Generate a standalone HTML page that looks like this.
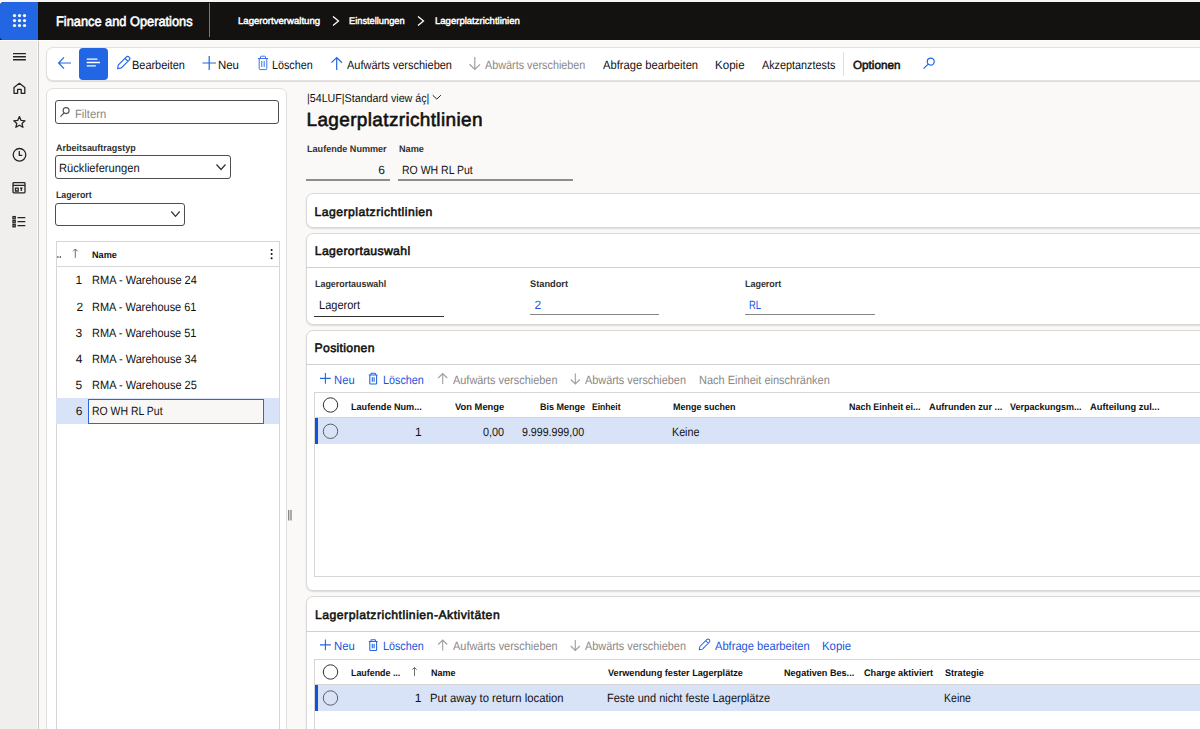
<!DOCTYPE html>
<html><head><meta charset="utf-8"><style>
html,body{margin:0;padding:0}
body{width:1200px;height:729px;overflow:hidden;position:relative;background:#faf9f8;font-family:"Liberation Sans",sans-serif;text-rendering:geometricPrecision}
.t{position:absolute;white-space:pre;line-height:40px;transform-origin:0 0}
.a{position:absolute;box-sizing:border-box}
svg{position:absolute;overflow:visible}
</style></head><body>
<!-- top bar -->
<div class="a" style="left:0;top:0;width:1200px;height:2px;background:#f6f6f6"></div>
<div class="a" style="left:0;top:1.6px;width:1200px;height:38px;background:#131211;border-radius:4px 0 0 0"></div>
<div class="a" style="left:0;top:1.6px;width:38.2px;height:38px;background:#2266e3;border-radius:4px 0 0 3px"></div>
<svg style="left:0;top:0" width="38" height="40">
 <g fill="#fff">
  <circle cx="14.5" cy="15.6" r="1.6"/><circle cx="19.5" cy="15.6" r="1.6"/><circle cx="24.5" cy="15.6" r="1.6"/>
  <circle cx="14.5" cy="20.6" r="1.6"/><circle cx="19.5" cy="20.6" r="1.6"/><circle cx="24.5" cy="20.6" r="1.6"/>
  <circle cx="14.5" cy="25.5" r="1.6"/><circle cx="19.5" cy="25.5" r="1.6"/><circle cx="24.5" cy="25.5" r="1.6"/>
 </g>
</svg>
<div class="a" style="left:208.5px;top:3px;width:1.2px;height:34px;background:#7a7978"></div>
<svg style="left:0;top:0" width="1200" height="40">
 <path d="M333 16.5 L338.5 21 L333 25.5" fill="none" stroke="#fff" stroke-width="1.3"/>
 <path d="M418 16.5 L423.5 21 L418 25.5" fill="none" stroke="#fff" stroke-width="1.3"/>
</svg>
<!-- nav rail -->
<div class="a" style="left:0;top:39.6px;width:37px;height:690px;background:#f0efee"></div>
<div class="a" style="left:0;top:39.6px;width:1200px;height:1.2px;background:#fdfdfd"></div>
<div class="a" style="left:37px;top:39.6px;width:1px;height:690px;background:#fdfdfd"></div>
<div class="a" style="left:38px;top:40.5px;width:1px;height:690px;background:#c6c5c4"></div>
<svg style="left:0;top:0" width="40" height="729">
 <g fill="none" stroke="#252423" stroke-width="1.3">
  <path d="M13 53.6H25.9M13 56.8H25.9M13 59.8H25.9" stroke-width="1.4"/>
  <path d="M14 87.5 L19.4 83.3 L24.8 87.5 V93.3 H21.2 V89.3 H17.6 V93.3 H14 Z" stroke-linejoin="round"/>
  <path d="M19.4 116.6 L21.1 120.4 L25 120.8 L22 123.4 L22.9 127.3 L19.4 125.2 L15.9 127.3 L16.8 123.4 L13.8 120.8 L17.7 120.4 Z" stroke-linejoin="round"/>
  <circle cx="19.5" cy="154.8" r="6.3"/>
  <path d="M19.3 150.9 V155.4 H22.3"/>
  <rect x="13" y="182.6" width="12" height="10.2" rx="0.8"/>
  <path d="M13 185.4H25 M15.5 188.2 H18.2 V191 H15.5 Z M20 188.2 H22.6 M21.3 188.2 V191"/>
  <rect x="13" y="216.6" width="2.2" height="2.2"/><rect x="13" y="220.6" width="2.2" height="2.2"/><rect x="13" y="224.6" width="2.2" height="2.2"/>
  <path d="M17.5 217.7H25.3 M17.5 221.7H25.3 M17.5 225.7H25.3"/>
 </g>
</svg>
<!-- action bar -->
<div class="a" style="left:46px;top:47px;width:1170px;height:34px;background:#fff;border:1px solid #e3e1df;border-radius:7px;box-shadow:0 1px 1px rgba(0,0,0,0.12)"></div>
<div class="a" style="left:79px;top:48px;width:29px;height:32px;background:#2266e3;border-radius:4px"></div>
<svg style="left:0;top:0" width="1000" height="90">
 <path d="M58.6 63 H71 M64 57.3 L58.6 63 L64 68.7" fill="none" stroke="#2266e3" stroke-width="1.2"/>
 <path d="M86.7 59.2H97.5 M86.7 62.5H100 M86.7 65.8H95.8" fill="none" stroke="#fff" stroke-width="1.3"/>
 <path transform="translate(117.6 68.7) rotate(-45)" d="M0 0 L3.2 -2.1 H14.2 Q16.3 -2.1 16.3 0 Q16.3 2.1 14.2 2.1 H3.2 Z M12.6 -2.1 V2.1" fill="none" stroke="#2266e3" stroke-width="1.15" stroke-linejoin="round"/>
 <path d="M209.2 56 V70 M202.5 63 H216" fill="none" stroke="#2266e3" stroke-width="1.2"/>
 <path d="M258 58.5 H268 M260.5 58.5 V57 Q260.5 56.2 261.3 56.2 H264.7 Q265.5 56.2 265.5 57 V58.5 M259.2 58.5 V68.6 Q259.2 69.6 260.2 69.6 H265.8 Q266.8 69.6 266.8 68.6 V58.5 M261.8 61 V67 M264.2 61 V67" fill="none" stroke="#2266e3" stroke-width="0.9"/>
 <path d="M336.7 57.5 V70 M331.5 62.7 L336.7 57.5 L342 62.7" fill="none" stroke="#2266e3" stroke-width="1.2"/>
 <path d="M474.8 57 V69.5 M469.5 64.3 L474.8 69.5 L480 64.3" fill="none" stroke="#a19f9d" stroke-width="1.2"/>
 <path d="M923.6 68.6 L928.2 64.1 M930.8 61.6 m-3.5 0 a3.5 3.5 0 1 0 7 0 a3.5 3.5 0 1 0 -7 0" fill="none" stroke="#2266e3" stroke-width="1.2"/>
</svg>
<div class="a" style="left:843px;top:52px;width:1px;height:24px;background:#e1dfdd"></div>
<!-- left panel -->
<div class="a" style="left:46px;top:87.5px;width:241px;height:660px;background:#fff;border:1px solid #e1dfdd;border-radius:7px"></div>
<div class="a" style="left:55px;top:100px;width:223.5px;height:23.5px;border:1px solid #4f4e4d;border-radius:3px"></div>
<div class="a" style="left:55px;top:155px;width:176px;height:24px;border:1px solid #4f4e4d;border-radius:3px"></div>
<div class="a" style="left:55px;top:202.5px;width:130px;height:23.5px;border:1px solid #4f4e4d;border-radius:3px"></div>
<div class="a" style="left:55.5px;top:240.5px;width:224.5px;height:520px;border:1px solid #d8d6d4"></div>
<div class="a" style="left:56px;top:266px;width:223px;height:1px;background:#d8d6d4"></div>
<div class="a" style="left:56px;top:398.3px;width:223px;height:25.7px;background:#d8e3f8"></div>
<div class="a" style="left:88px;top:398.5px;width:175.7px;height:25.5px;border:1.3px solid #2a66e0;background:#f8f7f6"></div>
<svg style="left:0;top:0" width="300" height="729">
 <path d="M60.4 116.6 L64 113 M66.1 110.6 m-3 0 a3 3 0 1 0 6 0 a3 3 0 1 0 -6 0" fill="none" stroke="#504f4e" stroke-width="1.1"/>
 <path d="M216.5 164.5 L221 169.5 L225.5 164.5" fill="none" stroke="#323130" stroke-width="1.2"/>
 <path d="M171.3 211.5 L175.5 216.3 L179.7 211.5" fill="none" stroke="#323130" stroke-width="1.2"/>
 <path d="M75.3 249 V257.8 M73 251.3 L75.3 249 L77.6 251.3" fill="none" stroke="#605e5c" stroke-width="0.9"/>
 <g fill="#161514"><circle cx="57.9" cy="257" r="0.75"/><circle cx="60.3" cy="257" r="0.75"/></g>
 <g fill="#111"><circle cx="271.6" cy="249.9" r="1"/><circle cx="271.6" cy="254.1" r="1"/><circle cx="271.6" cy="258.2" r="1"/></g>
 <path d="M288.7 510 V520.5 M291 510 V520.5" fill="none" stroke="#85837f" stroke-width="1.3"/>
</svg>
<!-- main header underlines -->
<svg style="left:0;top:0" width="1200" height="729">
 <path d="M432.7 95.2 L436.8 99.1 L440.9 95.2" fill="none" stroke="#252423" stroke-width="1"/>
</svg>
<div class="a" style="left:306px;top:179px;width:83.5px;height:2px;background:#8f8d8b"></div>
<div class="a" style="left:398px;top:179px;width:175px;height:2px;background:#8f8d8b"></div>
<!-- cards -->
<div class="a" style="left:305.5px;top:192.5px;width:920px;height:35px;background:#fff;border:1px solid #dad8d6;border-radius:7px;box-shadow:0 1px 1.5px rgba(0,0,0,0.12)"></div>
<div class="a" style="left:305.5px;top:233px;width:920px;height:92px;background:#fff;border:1px solid #dad8d6;border-radius:7px;box-shadow:0 1px 1.5px rgba(0,0,0,0.12)"></div>
<div class="a" style="left:305.5px;top:267px;width:920px;height:1px;background:#d2d0ce"></div>
<div class="a" style="left:314.2px;top:315.5px;width:130px;height:1px;background:#323130"></div>
<div class="a" style="left:529.5px;top:313.8px;width:129.5px;height:1.5px;background:#8a8886"></div>
<div class="a" style="left:745px;top:313.8px;width:129.5px;height:1.5px;background:#8a8886"></div>
<div class="a" style="left:305.5px;top:330.3px;width:920px;height:260.7px;background:#fff;border:1px solid #dad8d6;border-radius:7px;box-shadow:0 1px 1.5px rgba(0,0,0,0.12)"></div>
<div class="a" style="left:305.5px;top:363.5px;width:920px;height:1px;background:#d2d0ce"></div>
<div class="a" style="left:314.3px;top:392px;width:900px;height:184.5px;border:1px solid #d8d6d4"></div>
<div class="a" style="left:315px;top:417px;width:900px;height:1px;background:#d8d6d4"></div>
<div class="a" style="left:315px;top:417.5px;width:900px;height:26px;background:#d8e3f8"></div>
<div class="a" style="left:314.6px;top:417.5px;width:3px;height:26px;background:#0f52e0"></div>
<div class="a" style="left:305.5px;top:596.4px;width:920px;height:200px;background:#fff;border:1px solid #dad8d6;border-radius:7px;box-shadow:0 1px 1.5px rgba(0,0,0,0.12)"></div>
<div class="a" style="left:305.5px;top:631px;width:920px;height:1px;background:#d2d0ce"></div>
<div class="a" style="left:314.3px;top:659px;width:900px;height:200px;border:1px solid #d8d6d4"></div>
<div class="a" style="left:315px;top:684px;width:900px;height:1px;background:#d8d6d4"></div>
<div class="a" style="left:315px;top:685px;width:900px;height:25.8px;background:#d8e3f8"></div>
<div class="a" style="left:314.6px;top:685px;width:3px;height:25.8px;background:#0f52e0"></div>
<svg style="left:0;top:0" width="1200" height="729">
 <g fill="none" stroke="#2266e3" stroke-width="1.1">
  <path d="M325.4 373 V383.8 M320 378.4 H330.8"/>
  <path d="M368.8 375 H377.6 M371 375 V373.8 Q371 373.2 371.6 373.2 H374.8 Q375.4 373.2 375.4 373.8 V375 M369.8 375 V383.2 Q369.8 384 370.6 384 H375.8 Q376.6 384 376.6 383.2 V375 M372.3 377.3 V381.8 M374.1 377.3 V381.8"/>
  <path d="M325.4 639.5 V650.3 M320 644.9 H330.8"/>
  <path d="M368.8 641.5 H377.6 M371 641.5 V640.3 Q371 639.7 371.6 639.7 H374.8 Q375.4 639.7 375.4 640.3 V641.5 M369.8 641.5 V649.7 Q369.8 650.5 370.6 650.5 H375.8 Q376.6 650.5 376.6 649.7 V641.5 M372.3 643.8 V648.3 M374.1 643.8 V648.3"/>
  <path transform="translate(699.2 649.8) rotate(-45) scale(0.88)" d="M0 0 L3.2 -2.1 H14.2 Q16.3 -2.1 16.3 0 Q16.3 2.1 14.2 2.1 H3.2 Z M12.6 -2.1 V2.1" stroke-linejoin="round"/>
 </g>
 <g fill="none" stroke="#a19f9d" stroke-width="1.1">
  <path d="M442.7 373.5 V384 M438.2 378 L442.7 373.5 L447.2 378"/>
  <path d="M575.3 373.5 V384 M570.8 379.5 L575.3 384 L579.8 379.5"/>
  <path d="M442.7 640 V650.5 M438.2 644.5 L442.7 640 L447.2 644.5"/>
  <path d="M575.3 640 V650.5 M570.8 646 L575.3 650.5 L579.8 646"/>
 </g>
 <g fill="none" stroke="#323130" stroke-width="1">
  <circle cx="330.5" cy="405" r="7.2"/>
  <circle cx="330.5" cy="672" r="7.2"/>
 </g>
 <g fill="none" stroke="#605e5c" stroke-width="1">
  <circle cx="330.5" cy="431.3" r="7.2"/>
  <circle cx="330.5" cy="698" r="7.2"/>
  <path d="M414.5 667.5 V676 M412.3 669.7 L414.5 667.5 L416.7 669.7" stroke-width="0.9"/>
 </g>
</svg>

<span class="t" style="left:56.00px;top:1.89px;font-size:13.7px;font-weight:normal;-webkit-text-stroke:0.60px #ffffff;color:#ffffff;transform:scaleX(0.9349)">Finance and Operations</span>
<span class="t" style="left:238.00px;top:2.37px;font-size:9.6px;font-weight:normal;-webkit-text-stroke:0.45px #ffffff;color:#ffffff;letter-spacing:0.000px">Lagerortverwaltung</span>
<span class="t" style="left:349.00px;top:2.37px;font-size:9.6px;font-weight:normal;-webkit-text-stroke:0.45px #ffffff;color:#ffffff;transform:scaleX(0.9655)">Einstellungen</span>
<span class="t" style="left:434.50px;top:2.37px;font-size:9.6px;font-weight:normal;-webkit-text-stroke:0.45px #ffffff;color:#ffffff;transform:scaleX(0.9941)">Lagerplatzrichtlinien</span>
<span class="t" style="left:132.09px;top:45.31px;font-size:12px;font-weight:normal;color:#111110;transform:scaleX(0.9123)">Bearbeiten</span>
<span class="t" style="left:218.05px;top:45.31px;font-size:12px;font-weight:normal;color:#111110;transform:scaleX(0.9524)">Neu</span>
<span class="t" style="left:272.10px;top:45.31px;font-size:12px;font-weight:normal;color:#111110;transform:scaleX(0.8977)">Löschen</span>
<span class="t" style="left:346.70px;top:45.31px;font-size:12px;font-weight:normal;color:#111110;transform:scaleX(0.9149)">Aufwärts verschieben</span>
<span class="t" style="left:485.00px;top:45.31px;font-size:12px;font-weight:normal;color:#8a8886;transform:scaleX(0.9009)">Abwärts verschieben</span>
<span class="t" style="left:603.00px;top:45.31px;font-size:12px;font-weight:normal;color:#111110;transform:scaleX(0.9314)">Abfrage bearbeiten</span>
<span class="t" style="left:715.03px;top:45.31px;font-size:12px;font-weight:normal;color:#111110;transform:scaleX(0.9655)">Kopie</span>
<span class="t" style="left:762.00px;top:45.31px;font-size:12px;font-weight:normal;color:#111110;transform:scaleX(0.9012)">Akzeptanztests</span>
<span class="t" style="left:853.00px;top:46.38px;font-size:11.7px;font-weight:normal;-webkit-text-stroke:0.53px #111110;color:#111110;letter-spacing:0.000px">Optionen</span>
<span class="t" style="left:75.06px;top:93.81px;font-size:12px;font-weight:normal;color:#8a8886;transform:scaleX(0.9375)">Filtern</span>
<span class="t" style="left:55.80px;top:128.89px;font-size:9.5px;font-weight:bold;color:#323130;transform:scaleX(0.9435)">Arbeitsauftragstyp</span>
<span class="t" style="left:59.07px;top:148.11px;font-size:12px;font-weight:normal;color:#111110;transform:scaleX(0.9294)">Rücklieferungen</span>
<span class="t" style="left:56.00px;top:175.89px;font-size:9.5px;font-weight:bold;color:#323130;transform:scaleX(0.9231)">Lagerort</span>
<span class="t" style="left:92.00px;top:235.69px;font-size:9.5px;font-weight:bold;color:#111110;transform:scaleX(0.9615)">Name</span>
<span class="t" style="left:75.60px;top:259.71px;font-size:12px;font-weight:normal;color:#111110;letter-spacing:0.000px">1</span>
<span class="t" style="left:91.78px;top:259.71px;font-size:12px;font-weight:normal;color:#111110;transform:scaleX(0.9177)">RMA - Warehouse 24</span>
<span class="t" style="left:76.60px;top:286.61px;font-size:12px;font-weight:normal;color:#111110;letter-spacing:0.000px">2</span>
<span class="t" style="left:91.79px;top:286.61px;font-size:12px;font-weight:normal;color:#111110;transform:scaleX(0.9142)">RMA - Warehouse 61</span>
<span class="t" style="left:75.60px;top:312.71px;font-size:12px;font-weight:normal;color:#111110;letter-spacing:0.000px">3</span>
<span class="t" style="left:91.79px;top:312.71px;font-size:12px;font-weight:normal;color:#111110;transform:scaleX(0.9142)">RMA - Warehouse 51</span>
<span class="t" style="left:75.80px;top:338.51px;font-size:12px;font-weight:normal;color:#111110;letter-spacing:0.000px">4</span>
<span class="t" style="left:91.78px;top:338.51px;font-size:12px;font-weight:normal;color:#111110;transform:scaleX(0.9177)">RMA - Warehouse 34</span>
<span class="t" style="left:75.60px;top:364.61px;font-size:12px;font-weight:normal;color:#111110;letter-spacing:0.000px">5</span>
<span class="t" style="left:91.78px;top:364.61px;font-size:12px;font-weight:normal;color:#111110;transform:scaleX(0.9177)">RMA - Warehouse 25</span>
<span class="t" style="left:75.80px;top:391.41px;font-size:12px;font-weight:normal;color:#111110;letter-spacing:0.000px">6</span>
<span class="t" style="left:91.83px;top:391.41px;font-size:12px;font-weight:normal;color:#111110;transform:scaleX(0.8725)">RO WH RL Put</span>
<span class="t" style="left:306.57px;top:78.64px;font-size:11.5px;font-weight:normal;color:#111110;transform:scaleX(0.9292)">|54LUF|Standard view áç|</span>
<span class="t" style="left:306.50px;top:100.99px;font-size:19px;font-weight:normal;-webkit-text-stroke:0.60px #111110;color:#111110;letter-spacing:0.350px">Lagerplatzrichtlinien</span>
<span class="t" style="left:306.80px;top:130.39px;font-size:9.5px;font-weight:bold;color:#323130;transform:scaleX(0.9548)">Laufende Nummer</span>
<span class="t" style="left:398.80px;top:130.39px;font-size:9.5px;font-weight:bold;color:#323130;transform:scaleX(0.9615)">Name</span>
<span class="t" style="left:378.20px;top:149.61px;font-size:12px;font-weight:normal;color:#111110;letter-spacing:0.000px">6</span>
<span class="t" style="left:402.12px;top:149.61px;font-size:12px;font-weight:normal;color:#111110;transform:scaleX(0.8750)">RO WH RL Put</span>
<span class="t" style="left:314.50px;top:191.67px;font-size:12.2px;font-weight:normal;-webkit-text-stroke:0.55px #111110;color:#111110;letter-spacing:0.475px">Lagerplatzrichtlinien</span>
<span class="t" style="left:314.80px;top:231.37px;font-size:12.2px;font-weight:normal;-webkit-text-stroke:0.55px #111110;color:#111110;letter-spacing:0.371px">Lagerortauswahl</span>
<span class="t" style="left:314.80px;top:264.89px;font-size:9.5px;font-weight:bold;color:#323130;transform:scaleX(0.9368)">Lagerortauswahl</span>
<span class="t" style="left:529.50px;top:264.89px;font-size:9.5px;font-weight:bold;color:#323130;transform:scaleX(0.9744)">Standort</span>
<span class="t" style="left:745.30px;top:264.89px;font-size:9.5px;font-weight:bold;color:#323130;transform:scaleX(0.9410)">Lagerort</span>
<span class="t" style="left:318.68px;top:284.86px;font-size:12px;font-weight:normal;color:#111110;transform:scaleX(0.9182)">Lagerort</span>
<span class="t" style="left:534.50px;top:284.61px;font-size:12px;font-weight:normal;color:#1c55dc;letter-spacing:0.000px">2</span>
<span class="t" style="left:749.21px;top:284.61px;font-size:12px;font-weight:normal;color:#1c55dc;transform:scaleX(0.7857)">RL</span>
<span class="t" style="left:314.60px;top:328.27px;font-size:12.2px;font-weight:normal;-webkit-text-stroke:0.55px #111110;color:#111110;letter-spacing:0.322px">Positionen</span>
<span class="t" style="left:334.36px;top:359.61px;font-size:12px;font-weight:normal;color:#1c55dc;transform:scaleX(0.9381)">Neu</span>
<span class="t" style="left:382.50px;top:359.61px;font-size:12px;font-weight:normal;color:#1c55dc;transform:scaleX(0.9000)">Löschen</span>
<span class="t" style="left:453.00px;top:359.61px;font-size:12px;font-weight:normal;color:#8a8886;transform:scaleX(0.9105)">Aufwärts verschieben</span>
<span class="t" style="left:585.30px;top:359.61px;font-size:12px;font-weight:normal;color:#8a8886;transform:scaleX(0.9063)">Abwärts verschieben</span>
<span class="t" style="left:699.08px;top:359.61px;font-size:12px;font-weight:normal;color:#8a8886;transform:scaleX(0.9163)">Nach Einheit einschränken</span>
<span class="t" style="left:350.80px;top:387.59px;font-size:9.5px;font-weight:bold;color:#111110;transform:scaleX(0.9581)">Laufende Num...</span>
<span class="t" style="left:454.70px;top:387.59px;font-size:9.5px;font-weight:bold;color:#111110;transform:scaleX(0.9860)">Von Menge</span>
<span class="t" style="left:539.50px;top:387.59px;font-size:9.5px;font-weight:bold;color:#111110;transform:scaleX(0.9468)">Bis Menge</span>
<span class="t" style="left:592.00px;top:387.59px;font-size:9.5px;font-weight:bold;color:#111110;transform:scaleX(0.9000)">Einheit</span>
<span class="t" style="left:672.80px;top:387.59px;font-size:9.5px;font-weight:bold;color:#111110;transform:scaleX(0.9455)">Menge suchen</span>
<span class="t" style="left:849.20px;top:387.59px;font-size:9.5px;font-weight:bold;color:#111110;transform:scaleX(0.9408)">Nach Einheit ei...</span>
<span class="t" style="left:929.20px;top:387.59px;font-size:9.5px;font-weight:bold;color:#111110;transform:scaleX(0.9707)">Aufrunden zur ...</span>
<span class="t" style="left:1010.00px;top:387.59px;font-size:9.5px;font-weight:bold;color:#111110;transform:scaleX(0.9467)">Verpackungsm...</span>
<span class="t" style="left:1090.20px;top:387.59px;font-size:9.5px;font-weight:bold;color:#111110;transform:scaleX(0.9829)">Aufteilung zul...</span>
<span class="t" style="left:415.00px;top:411.61px;font-size:12px;font-weight:normal;color:#111110;letter-spacing:0.000px">1</span>
<span class="t" style="left:482.70px;top:411.61px;font-size:12px;font-weight:normal;color:#111110;transform:scaleX(0.9043)">0,00</span>
<span class="t" style="left:522.00px;top:411.61px;font-size:12px;font-weight:normal;color:#111110;transform:scaleX(0.8857)">9.999.999,00</span>
<span class="t" style="left:672.41px;top:411.61px;font-size:12px;font-weight:normal;color:#111110;transform:scaleX(0.8931)">Keine</span>
<span class="t" style="left:315.00px;top:595.17px;font-size:12.2px;font-weight:normal;-webkit-text-stroke:0.55px #111110;color:#111110;letter-spacing:0.500px">Lagerplatzrichtlinien-Aktivitäten</span>
<span class="t" style="left:334.26px;top:626.11px;font-size:12px;font-weight:normal;color:#1c55dc;transform:scaleX(0.9429)">Neu</span>
<span class="t" style="left:382.50px;top:626.11px;font-size:12px;font-weight:normal;color:#1c55dc;transform:scaleX(0.8955)">Löschen</span>
<span class="t" style="left:452.50px;top:626.11px;font-size:12px;font-weight:normal;color:#8a8886;transform:scaleX(0.9123)">Aufwärts verschieben</span>
<span class="t" style="left:585.30px;top:626.11px;font-size:12px;font-weight:normal;color:#8a8886;transform:scaleX(0.9063)">Abwärts verschieben</span>
<span class="t" style="left:714.70px;top:626.11px;font-size:12px;font-weight:normal;color:#1c55dc;transform:scaleX(0.9275)">Abfrage bearbeiten</span>
<span class="t" style="left:822.25px;top:626.11px;font-size:12px;font-weight:normal;color:#1c55dc;transform:scaleX(0.9483)">Kopie</span>
<span class="t" style="left:350.50px;top:653.79px;font-size:9.5px;font-weight:bold;color:#111110;transform:scaleX(0.9340)">Laufende ...</span>
<span class="t" style="left:431.40px;top:653.79px;font-size:9.5px;font-weight:bold;color:#111110;transform:scaleX(0.9462)">Name</span>
<span class="t" style="left:607.50px;top:653.79px;font-size:9.5px;font-weight:bold;color:#111110;transform:scaleX(0.9607)">Verwendung fester Lagerplätze</span>
<span class="t" style="left:783.50px;top:653.79px;font-size:9.5px;font-weight:bold;color:#111110;transform:scaleX(0.9562)">Negativen Bes...</span>
<span class="t" style="left:863.50px;top:653.79px;font-size:9.5px;font-weight:bold;color:#111110;transform:scaleX(0.9625)">Charge aktiviert</span>
<span class="t" style="left:944.50px;top:653.79px;font-size:9.5px;font-weight:bold;color:#111110;transform:scaleX(0.9550)">Strategie</span>
<span class="t" style="left:414.70px;top:678.11px;font-size:12px;font-weight:normal;color:#111110;letter-spacing:0.000px">1</span>
<span class="t" style="left:430.46px;top:678.11px;font-size:12px;font-weight:normal;color:#111110;transform:scaleX(0.9404)">Put away to return location</span>
<span class="t" style="left:606.58px;top:678.11px;font-size:12px;font-weight:normal;color:#111110;transform:scaleX(0.9193)">Feste und nicht feste Lagerplätze</span>
<span class="t" style="left:943.62px;top:678.11px;font-size:12px;font-weight:normal;color:#111110;transform:scaleX(0.8793)">Keine</span>
</body></html>
